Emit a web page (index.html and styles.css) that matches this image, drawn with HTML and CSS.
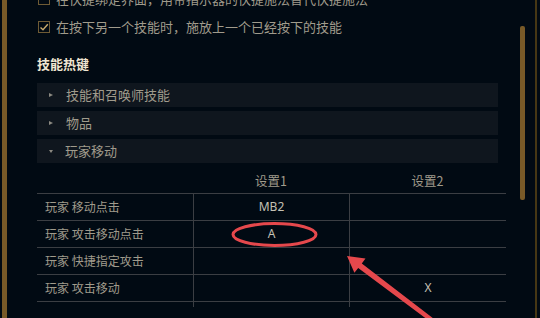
FILE: index.html
```html
<!DOCTYPE html>
<html lang="zh">
<head>
<meta charset="utf-8">
<link rel="stylesheet" href="styles.css">
</head>
<body>
<div class="frame">
  <div class="edge-left"></div>
  <div class="content">
    <div class="option">
      <span class="checkbox"></span>
      <span class="option-text">在快捷绑定界面，用带指示器的快捷施法替代快捷施法</span>
    </div>
    <div class="option">
      <span class="checkbox checked">
        <svg viewBox="0 0 12 12" width="12" height="12"><path d="M2.5 6.5 L5 8.8 L9.8 3.2" fill="none" stroke="#c8aa6e" stroke-width="1.4"/></svg>
      </span>
      <span class="option-text">在按下另一个技能时，施放上一个已经按下的技能</span>
    </div>
    <h2 class="section-title">技能热键</h2>
    <div class="accordion">
      <div class="acc-row"><span class="tri tri-right"></span><span class="acc-label">技能和召唤师技能</span></div>
      <div class="acc-row"><span class="tri tri-right"></span><span class="acc-label">物品</span></div>
      <div class="acc-row"><span class="tri tri-down"></span><span class="acc-label">玩家移动</span></div>
    </div>
    <div class="table">
      <div class="th"></div>
      <div class="th">设置1</div>
      <div class="th">设置2</div>

      <div class="td label">玩家 移动点击</div>
      <div class="td val sep">MB2</div>
      <div class="td val sep"></div>

      <div class="td label">玩家 攻击移动点击</div>
      <div class="td val sep">A</div>
      <div class="td val sep"></div>

      <div class="td label">玩家 快捷指定攻击</div>
      <div class="td val sep"></div>
      <div class="td val sep"></div>

      <div class="td label">玩家 攻击移动</div>
      <div class="td val sep"></div>
      <div class="td val sep">X</div>

      <div class="tail"></div>
      <div class="tail sep"></div>
      <div class="tail sep"></div>
    </div>
  </div>
  <div class="scroll"><div class="thumb"></div></div>
  <div class="edge-right"></div>
</div>
<svg class="annot" viewBox="0 0 540 318" width="540" height="318">
  <ellipse cx="274.5" cy="234.5" rx="41.5" ry="11" fill="none" stroke="#e5484c" stroke-width="3"/>
  <polygon points="347,256 365.5,258.6 361.8,263.4 436.4,320.8 433.6,324.2 358.2,268 354.4,272.8" fill="#e5484c"/>
</svg>
</body>
</html>
```
FILE: styles.css
```css
* { box-sizing: border-box; }
html, body { margin: 0; padding: 0; }
body {
  width: 540px;
  height: 318px;
  overflow: hidden;
  background: #010a13;
  font-family: "Noto Sans CJK SC", "Noto Sans", sans-serif;
  color: #a09b8c;
  position: relative;
}
.frame {
  display: flex;
  height: 318px;
  overflow: hidden;
}
.edge-left {
  width: 5px;
  margin-left: 2px;
  background: #785a28;
  flex: none;
}
.content {
  width: 499px;
  padding-left: 30px;
  margin-top: -7px;
  flex: none;
}
.option {
  display: flex;
  align-items: center;
  height: 12px;
  gap: 6px;
  margin-left: 1px;
  margin-bottom: 16px;
}
.checkbox {
  width: 12px;
  height: 12px;
  border: 1px solid #6f5b35;
  flex: none;
  display: flex;
  align-items: center;
  justify-content: center;
}
.checkbox svg { display: block; margin: -1px; }
.option-text {
  font-size: 13px;
  line-height: 16px;
  white-space: nowrap;
  color: #a09b8c;
}
.section-title {
  margin: 23px 0 11px 0;
  font-size: 13px;
  line-height: 16px;
  font-weight: bold;
  color: #f0e6d2;
}
.accordion {
  display: flex;
  flex-direction: column;
  gap: 4px;
  width: 461px;
}
.acc-row {
  height: 24px;
  background: #0f161e;
  display: flex;
  align-items: center;
  padding-left: 11px;
}
.tri {
  width: 0;
  height: 0;
  flex: none;
}
.tri-right {
  border-top: 2.5px solid transparent;
  border-bottom: 2.5px solid transparent;
  border-left: 4px solid #8c8a82;
  margin-right: 13px;
  margin-left: 1px;
}
.tri-down {
  border-left: 2.5px solid transparent;
  border-right: 2.5px solid transparent;
  border-top: 3.5px solid #8c8a82;
  margin-right: 12px;
  margin-left: 1px;
}
.acc-label {
  font-size: 13px;
  line-height: 16px;
  color: #a09b8c;
}
.table {
  margin-top: 3px;
  width: 469px;
  display: grid;
  grid-template-columns: 156px 156px 157px;
}
.th {
  height: 28px;
  border-bottom: 1px solid #3b3e43;
  font-size: 12.5px;
  line-height: 27px;
  text-align: center;
  color: #a09b8c;
  padding-top: 1px;
}
.td {
  height: 27px;
  border-bottom: 1px solid #3b3e43;
  font-size: 12px;
  line-height: 26px;
  white-space: nowrap;
}
.label {
  padding-left: 8px;
  color: #a09b8c;
}
.val {
  text-align: center;
  font-family: "Noto Sans", "Noto Sans CJK SC", sans-serif;
  color: #c4c0b4;
}
.sep { border-left: 1px solid #3b3e43; }
.tail { height: 5px; }
.scroll {
  width: 29px;
  padding-left: 14px;
  padding-top: 26px;
  flex: none;
}
.thumb {
  width: 5px;
  height: 174px;
  background: #785a28;
  border-radius: 2px;
}
.edge-right {
  width: 2px;
  background: #463714;
  flex: none;
}
.annot {
  position: absolute;
  left: 0;
  top: 0;
  pointer-events: none;
}
```
